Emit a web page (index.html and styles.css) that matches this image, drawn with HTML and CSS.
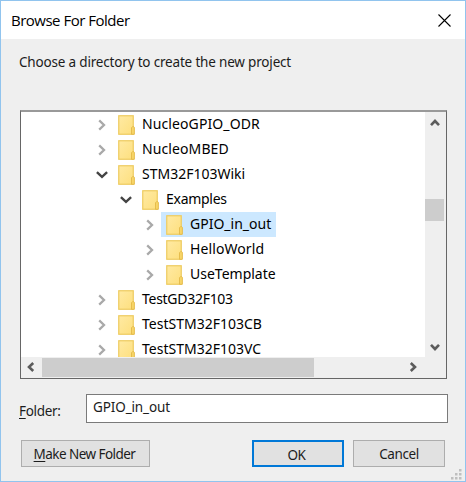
FILE: index.html
```
<!DOCTYPE html>
<html lang="en">
<head>
<meta charset="utf-8">
<title>Browse For Folder</title>
<link rel="stylesheet" href="styles.css">
</head>
<body>
<svg class="defs" aria-hidden="true">
  <defs>
    <linearGradient id="paper" x1="0" y1="0" x2="1" y2="1"><stop offset="0" stop-color="#ffeaa3"/><stop offset="1" stop-color="#fddf7e"/></linearGradient>
    <symbol id="folder" viewBox="0 0 17 20">
      <rect x=".75" y=".75" width="14.5" height="18.5" fill="url(#paper)" stroke="#eecb5e" stroke-width="1.2"/>
      <path d="M13.5 19.3v-6.6l1-1h1.3l.6.8v6.8z" fill="#f8d567" stroke="#e3b948" stroke-width=".9"/>
    </symbol>
    <symbol id="chevron" viewBox="0 0 12 12"><path d="M3.2 1.4 8 6 3.2 10.6" fill="none" stroke="currentColor" stroke-width="2.3"/></symbol>
    <symbol id="open" viewBox="0 0 12 12"><path d="M.9 3.2 6 7.9 11.1 3.2" fill="none" stroke="currentColor" stroke-width="2.4"/></symbol>
    <symbol id="arrow" viewBox="0 0 12 12"><path d="M2 8.2 6 4 10 8.2" fill="none" stroke="currentColor" stroke-width="2.6"/></symbol>
  </defs>
</svg>
<main class="dialog">
  <header class="titlebar">
    <h1 class="title">Browse For Folder</h1>
    <svg class="close" viewBox="0 0 13 13"><path d="M.5.5l12 12M12.5.5l-12 12" stroke="#000" stroke-width="1.1"/></svg>
  </header>
  <p class="prompt">Choose a directory to create the new project</p>
  <section class="tree">
    <ul class="list">
      <li class="row"><svg class="toggle"><use href="#chevron"/></svg><svg class="icon"><use href="#folder"/></svg><span class="name wide">NucleoGPIO_ODR</span></li>
      <li class="row"><svg class="toggle"><use href="#chevron"/></svg><svg class="icon"><use href="#folder"/></svg><span class="name wide">NucleoMBED</span></li>
      <li class="row"><svg class="toggle expanded"><use href="#open"/></svg><svg class="icon"><use href="#folder"/></svg><span class="name">STM32F103Wiki</span></li>
      <li class="row level2"><svg class="toggle expanded"><use href="#open"/></svg><svg class="icon"><use href="#folder"/></svg><span class="name tight">Examples</span></li>
      <li class="row level3"><svg class="toggle"><use href="#chevron"/></svg><span class="selected"><svg class="icon"><use href="#folder"/></svg><span class="name">GPIO_in_out</span></span></li>
      <li class="row level3"><svg class="toggle"><use href="#chevron"/></svg><svg class="icon"><use href="#folder"/></svg><span class="name wide">HelloWorld</span></li>
      <li class="row level3"><svg class="toggle"><use href="#chevron"/></svg><svg class="icon"><use href="#folder"/></svg><span class="name">UseTemplate</span></li>
      <li class="row"><svg class="toggle"><use href="#chevron"/></svg><svg class="icon"><use href="#folder"/></svg><span class="name tight">TestGD32F103</span></li>
      <li class="row"><svg class="toggle"><use href="#chevron"/></svg><svg class="icon"><use href="#folder"/></svg><span class="name">TestSTM32F103CB</span></li>
      <li class="row"><svg class="toggle"><use href="#chevron"/></svg><svg class="icon"><use href="#folder"/></svg><span class="name">TestSTM32F103VC</span></li>
    </ul>
    <div class="vscroll">
      <svg class="arrow"><use href="#arrow"/></svg>
      <div class="vthumb"></div>
      <svg class="arrow down"><use href="#arrow"/></svg>
    </div>
    <div class="hscroll">
      <svg class="arrow left"><use href="#arrow"/></svg>
      <div class="hthumb"></div>
      <svg class="arrow right"><use href="#arrow"/></svg>
    </div>
  </section>
  <div class="field">
    <label class="label" for="folder-name"><u>F</u>older:</label>
    <input class="input" id="folder-name" value="GPIO_in_out">
  </div>
  <footer class="actions">
    <button class="button make"><u>M</u>ake New Folder</button>
    <button class="button ok">OK</button>
    <button class="button cancel">Cancel</button>
  </footer>
  <svg class="grip" viewBox="0 0 11 11" fill="#bfbfbf"><path d="M8 0h2.5v2.5H8zM4 4h2.5v2.5H4zM8 4h2.5v2.5H8zM0 8h2.5v2.5H0zM4 8h2.5v2.5H4zM8 8h2.5v2.5H8z"/></svg>
</main>
</body>
</html>
```
FILE: styles.css
```
* { box-sizing: border-box; }
body { margin: 0; overflow: hidden; font: 13.5px "Noto Sans", sans-serif; color: #1c1c1c; }
.defs { position: absolute; width: 0; height: 0; }
.dialog {
  position: relative;
  width: 466px;
  height: 482px;
  border: 1px solid #91c4ee;
  background: #efefef;
}
.titlebar {
  display: flex;
  align-items: center;
  justify-content: space-between;
  height: 38px;
  padding: 0 14px 0 10px;
  background: #fff;
}
.title { margin: 0; font: 15px "Open Sans", sans-serif; letter-spacing: -.5px; color: #000; }
.close { width: 13px; height: 13px; }
.prompt { margin: 13px 0 0 18px; height: 20px; line-height: 20px; letter-spacing: -.18px; white-space: nowrap; }
.tree {
  display: grid;
  grid-template: 245px 20px / 404px 20px;
  width: 427px;
  height: 269px;
  margin: 38px 0 0 19px;
  border: 1px solid #6e6e6e;
  border-width: 2px 1px 1px 1px;
  border-color: #999 #666 #666 #666;
  background: #efefef;
}
.list { margin: 0; padding: 0; overflow: hidden; list-style: none; background: #fff; }
.row { display: flex; align-items: center; height: 25px; padding-left: 75px; }
.level2 { padding-left: 99px; }
.level3 { padding-left: 123px; }
.toggle { flex: none; width: 12px; height: 12px; margin-right: 10px; color: #a9a9a9; }
.expanded { color: #444; }
.icon { flex: none; width: 17px; height: 20px; margin-right: 7px; }
.name { height: 25px; font-size: 14px; line-height: 23px; color: #000; white-space: nowrap; }
.wide { letter-spacing: .1px; }
.tight { letter-spacing: -.28px; }
.selected { display: flex; align-items: center; height: 25px; margin-left: -5px; padding: 0 5px; background: #cce8ff; }
.vscroll { display: flex; flex-direction: column; align-items: center; padding: 5px 1px 4px 0; }
.vthumb { width: 19px; height: 22px; margin: 70px 0 auto; background: #cdcdcd; }
.arrow { flex: none; width: 12px; height: 12px; color: #5c5c5c; }
.down { transform: rotate(180deg); }
.left { transform: rotate(-90deg); }
.right { transform: rotate(90deg); }
.hscroll { display: flex; align-items: center; padding: 0 6px 0 4px; }
.hthumb { width: 272px; height: 19px; margin: 0 auto 0 5px; background: #cdcdcd; }
.field { display: flex; margin: 15px 0 0 18px; }
.label { width: 67px; padding-top: 8px; line-height: 19px; letter-spacing: -.3px; }
u { text-decoration-thickness: 1px; text-underline-offset: 2px; }
.input {
  width: 362px;
  height: 29px;
  padding: 0 0 4px 6px;
  border: 1px solid #7a7a7a;
  outline: 0;
  background: #fff;
  font: inherit;
  color: inherit;
  letter-spacing: -.12px;
}
.actions { display: flex; margin: 17px 0 0 20px; }
.button {
  height: 27px;
  padding: 2px 0 0;
  border: 1px solid #adadad;
  background: #e1e1e1;
  font: inherit;
  line-height: 23px;
  color: inherit;
  letter-spacing: -.55px;
}
.make { width: 129px; padding-right: 2px; }
.ok { width: 92px; margin: 0 9px 0 102px; padding-right: 3px; border: 2px solid #0078d7; }
.cancel { width: 92px; letter-spacing: -.4px; }
.grip { position: absolute; right: 3px; bottom: 1px; width: 11px; height: 11px; }
```
